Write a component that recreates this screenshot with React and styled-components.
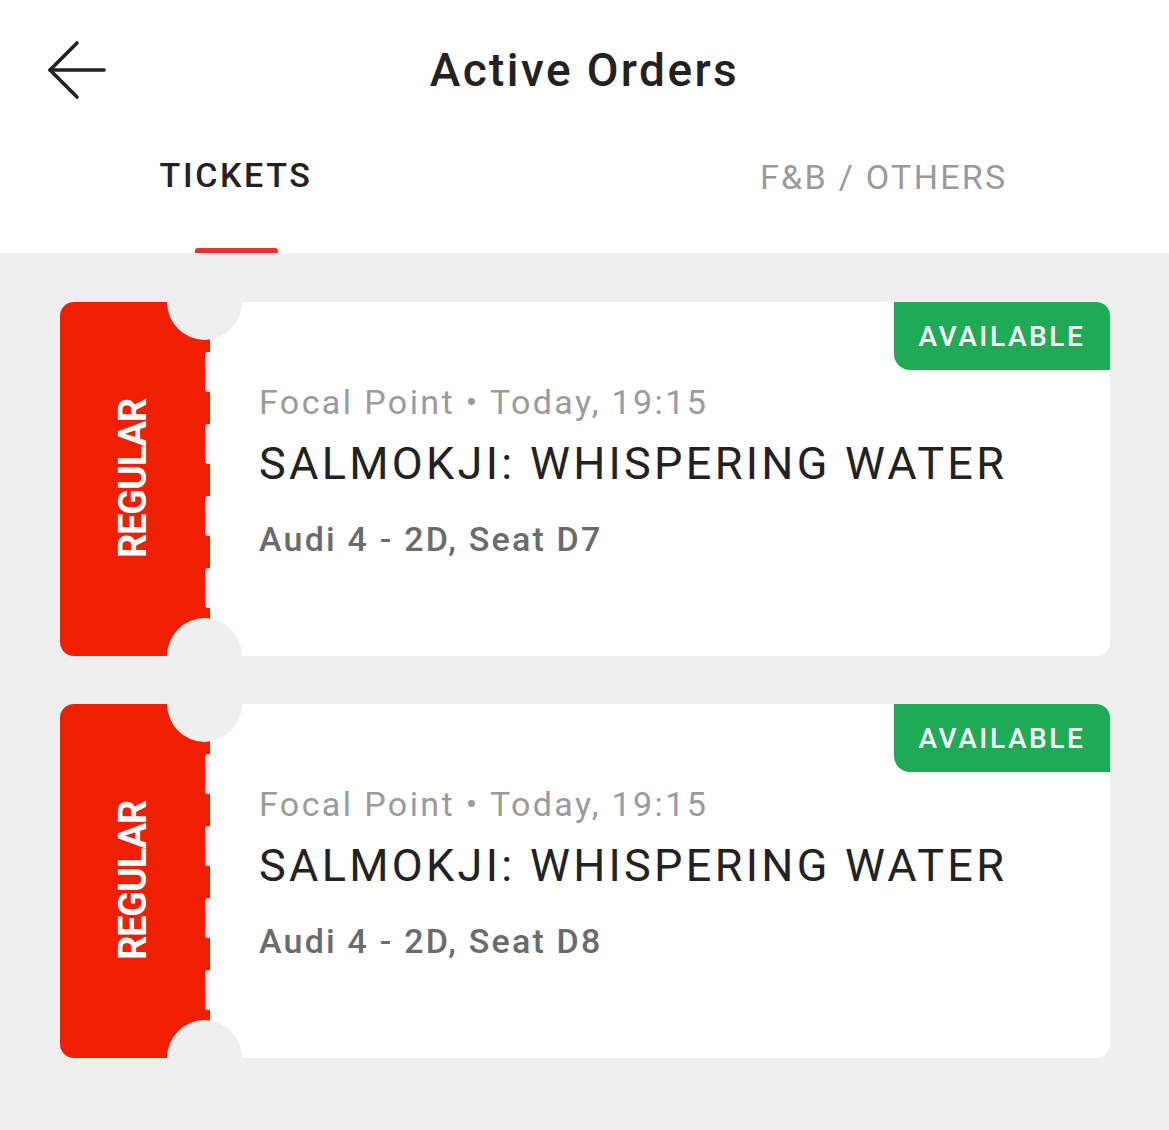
import React from 'react'
import styled, { createGlobalStyle } from 'styled-components'

const GlobalStyle = createGlobalStyle`
  body {
    margin: 0;
    background: #efefef;
    font-family: Roboto, "Liberation Sans", Arial, sans-serif;
  }
`

const Page = styled.div`
  width: 1169px;
  min-height: 1130px;
  background: #efefef;
`

const Header = styled.header`
  background: #fff;
`

const Toolbar = styled.div`
  display: grid;
  grid-template-columns: 1fr auto 1fr;
  align-items: center;
  height: 140px;
`

const BackButton = styled.button`
  justify-self: start;
  display: flex;
  margin-left: 45px;
  padding: 0;
  border: 0;
  background: none;
  cursor: pointer;
`

const Title = styled.h1`
  margin: 0;
  font-size: 46px;
  font-weight: 500;
  letter-spacing: 2.4px;
  color: #222;
`

const Tabs = styled.nav`
  display: flex;
  height: 113px;
`

const Tab = styled.div`
  position: relative;
  box-sizing: border-box;
  width: ${p => p.$width}px;
  padding: ${p => p.$top}px 0 0 ${p => p.$left || 0}px;
  text-align: ${p => (p.$left ? 'left' : 'center')};
  font-size: 34px;
  line-height: 40px;
  letter-spacing: ${p => (p.$active ? 2.6 : 2.3)}px;
  font-weight: ${p => (p.$active ? 500 : 400)};
  color: ${p => (p.$active ? '#222' : '#9a9a9a')};

  &::after {
    content: '';
    display: ${p => (p.$active ? 'block' : 'none')};
    position: absolute;
    left: 50%;
    bottom: 0;
    width: 83px;
    height: 5px;
    margin-left: -41px;
    border-radius: 3px 3px 0 0;
    background: #e8352b;
  }
`

const List = styled.main`
  display: flex;
  flex-direction: column;
  gap: 48px;
  padding: 49px 59px 48px 60px;
`

const Card = styled.article`
  position: relative;
  display: flex;
  height: 354px;
  border-radius: 14px;
  overflow: hidden;
  background: #fff;
`

const Stub = styled.div`
  display: flex;
  width: 150px;
  background: #f21e00;
`

const StubLabel = styled.div`
  flex: 1;
  display: flex;
  align-items: center;
  justify-content: center;
`

const Vertical = styled.span`
  writing-mode: vertical-rl;
  transform: rotate(180deg);
  font-size: 38px;
  font-weight: 700;
  letter-spacing: -1.2px;
  color: #fff;
`

const Perforation = styled.div`
  display: flex;
  flex-direction: column;
  gap: 32px;
  padding-top: 50px;
`

const Dash = styled.span`
  width: 5px;
  height: 40px;
  border-radius: 3px 0 0 3px;
  background: #ececec;
`

const Notch = styled.span`
  position: absolute;
  left: 107px;
  ${p => (p.$bottom ? 'bottom: -38px;' : 'top: -38px;')}
  width: 75px;
  height: 76px;
  border-radius: 50%;
  background: #efefef;
`

const Body = styled.div`
  flex: 1;
  padding: 80px 0 0 49px;
`

const Meta = styled.div`
  font-size: 34px;
  line-height: 40px;
  letter-spacing: 2.4px;
  color: #9b9b9b;
`

const Movie = styled.div`
  margin-top: 16px;
  font-size: 45px;
  line-height: 52px;
  letter-spacing: 3.3px;
  color: #222;
`

const Seat = styled.div`
  margin-top: 29px;
  font-size: 34px;
  line-height: 40px;
  font-weight: 500;
  letter-spacing: 2.2px;
  color: #6b6b6b;
`

const Badge = styled.span`
  position: absolute;
  top: 0;
  right: 0;
  display: flex;
  align-items: center;
  justify-content: center;
  width: 216px;
  height: 68px;
  border-bottom-left-radius: 16px;
  background: #1faa55;
  font-size: 28px;
  font-weight: 500;
  letter-spacing: 2.6px;
  color: #fff;
`

const BackIcon = () => (
  <svg width="64" height="64" viewBox="0 0 64 64" fill="none" stroke="#222" strokeWidth="3.6" strokeLinecap="round" strokeLinejoin="round">
    <path d="M5 32 L59 32" />
    <path d="M32 5 L5 32 L32 59" />
  </svg>
)

const orders = [
  { venue: 'Focal Point', time: 'Today, 19:15', movie: 'SALMOKJI: WHISPERING WATER', seat: 'Audi 4 - 2D, Seat D7' },
  { venue: 'Focal Point', time: 'Today, 19:15', movie: 'SALMOKJI: WHISPERING WATER', seat: 'Audi 4 - 2D, Seat D8' },
]

const Ticket = ({ venue, time, movie, seat }) => (
  <Card>
    <Stub>
      <StubLabel>
        <Vertical>REGULAR</Vertical>
      </StubLabel>
      <Perforation>
        <Dash />
        <Dash />
        <Dash />
        <Dash />
      </Perforation>
    </Stub>
    <Notch />
    <Notch $bottom />
    <Body>
      <Meta>{venue} • {time}</Meta>
      <Movie>{movie}</Movie>
      <Seat>{seat}</Seat>
    </Body>
    <Badge>AVAILABLE</Badge>
  </Card>
)

export default function App() {
  return (
    <Page>
      <GlobalStyle />
      <Header>
        <Toolbar>
          <BackButton aria-label="Back">
            <BackIcon />
          </BackButton>
          <Title>Active Orders</Title>
        </Toolbar>
        <Tabs>
          <Tab $active $width={472} $top={15}>TICKETS</Tab>
          <Tab $width={697} $top={17} $left={288}>F&amp;B / OTHERS</Tab>
        </Tabs>
      </Header>
      <List>
        {orders.map((o, i) => (
          <Ticket key={i} {...o} />
        ))}
      </List>
    </Page>
  )
}
